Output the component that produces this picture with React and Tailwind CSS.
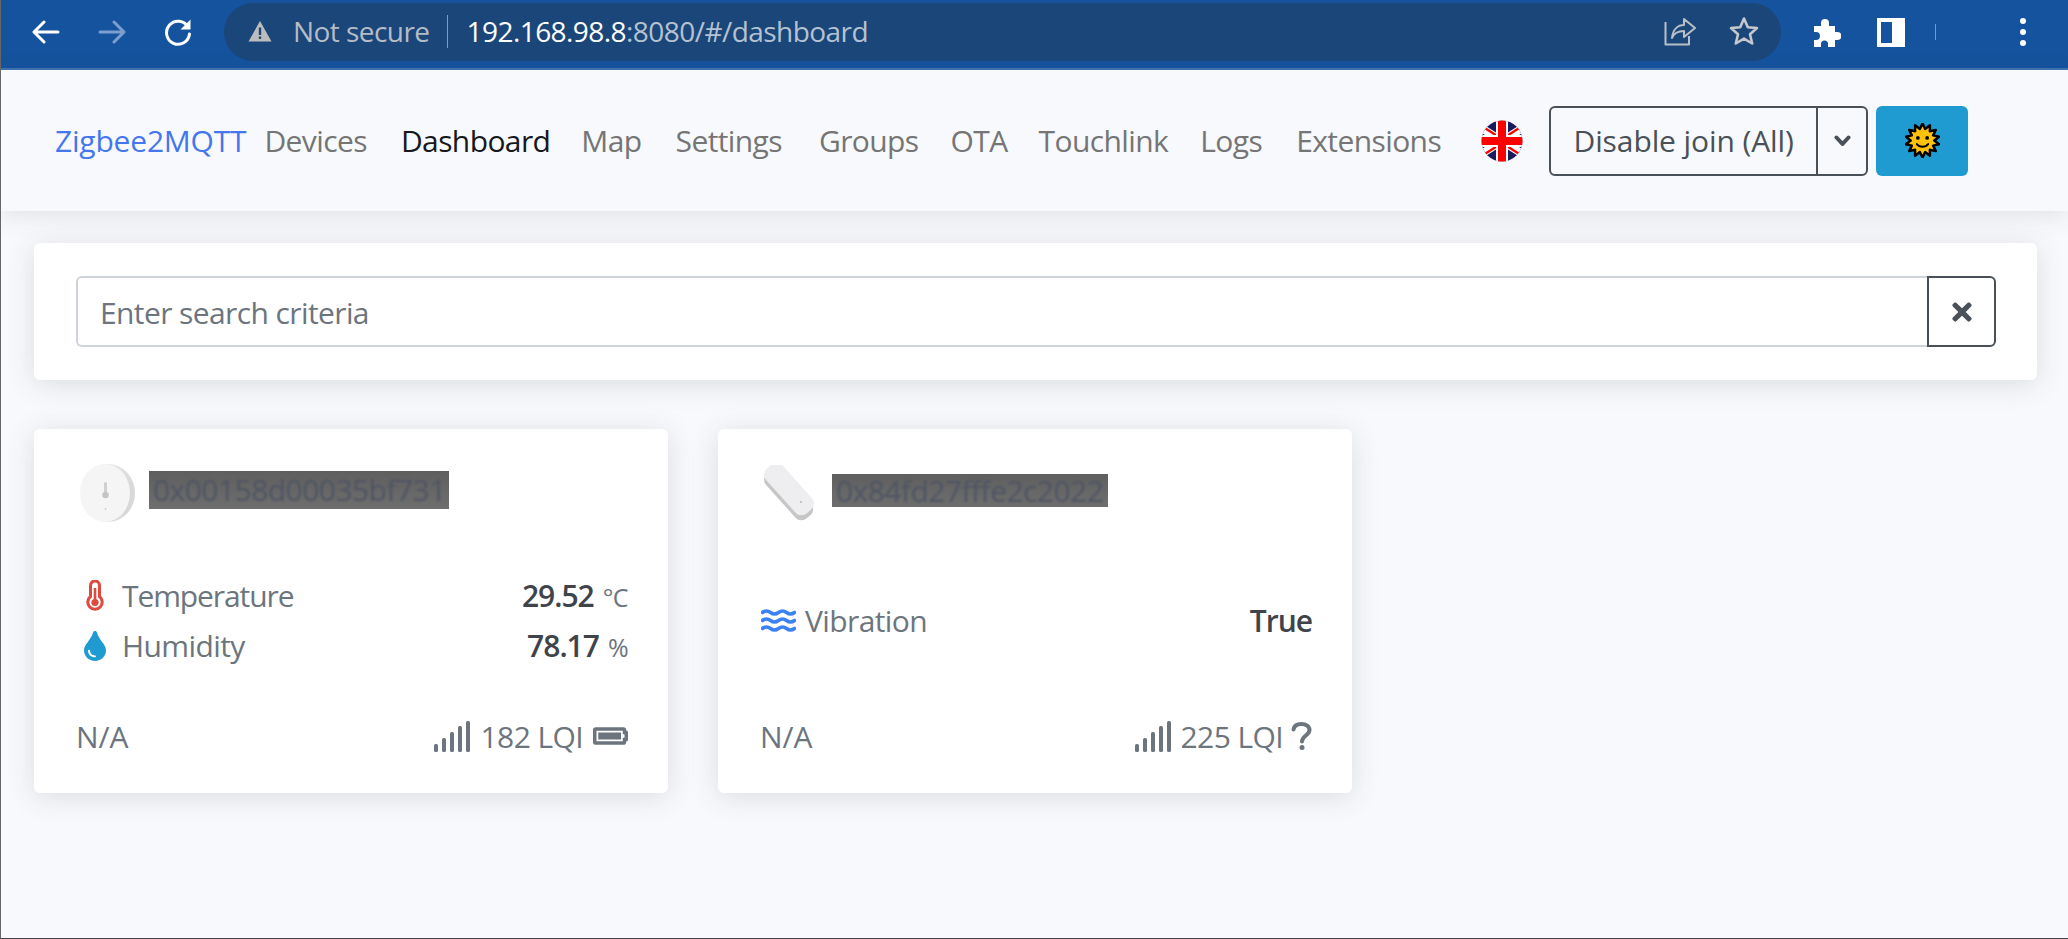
import { FaBatteryFull, FaTimes, FaTint } from "react-icons/fa";

const navLinks = [
    { label: "Devices", gap: "mr-[34px]" },
    { label: "Dashboard", gap: "mr-[31px]", active: true },
    { label: "Map", gap: "mr-[34px]" },
    { label: "Settings", gap: "mr-[37px]" },
    { label: "Groups", gap: "mr-[32px]" },
    { label: "OTA", gap: "mr-[31px]" },
    { label: "Touchlink", gap: "mr-[32px]" },
    { label: "Logs", gap: "mr-[34px]" },
    { label: "Extensions", gap: "mr-[40px]" },
];

function SunFace() {
    const points = [];
    for (let i = 0; i < 28; i++) {
        const r = i % 2 === 0 ? 16.5 : 11.5;
        const a = (Math.PI * i) / 14;
        points.push(`${(17 + r * Math.sin(a)).toFixed(2)},${(17 - r * Math.cos(a)).toFixed(2)}`);
    }
    return (
        <svg viewBox="0 0 34 34" className="w-[35px] h-[35px]">
            <polygon points={points.join(" ")} fill="#ffc20a" stroke="#000" strokeWidth="2.4" strokeLinejoin="round" />
            <circle cx="12.5" cy="14.5" r="1.8" fill="#000" />
            <circle cx="21.5" cy="14.5" r="1.8" fill="#000" />
            <path d="M11.5 20.5c2.5 3.4 8.5 3.4 11 0" fill="none" stroke="#000" strokeWidth="1.8" strokeLinecap="round" />
        </svg>
    );
}

function UkFlag() {
    return (
        <svg viewBox="0 0 42 42" className="w-[42px] h-[42px] mr-[26px]">
            <clipPath id="flag-circle">
                <circle cx="21" cy="21" r="20.5" />
            </clipPath>
            <g clipPath="url(#flag-circle)">
                <rect width="42" height="42" fill="#1a1a5e" />
                <path d="M-12 0L54 42M54 0L-12 42" stroke="#fff" strokeWidth="8" />
                <path d="M-12 -2L21 19M54 44L21 23M54 -2L21 19M-12 44L21 23" stroke="#f00" strokeWidth="2.5" />
                <path d="M21 0V42M0 21H42" stroke="#fff" strokeWidth="12" />
                <path d="M21 0V42M0 21H42" stroke="#f00" strokeWidth="8" />
            </g>
        </svg>
    );
}

function SignalBars() {
    return (
        <svg viewBox="0 0 36 31" className="w-[36px] h-[31px]" fill="#6c757d">
            <rect x="0" y="23" width="4" height="8" rx="1.5" />
            <rect x="8" y="17" width="4" height="14" rx="1.5" />
            <rect x="16" y="11" width="4" height="20" rx="1.5" />
            <rect x="24" y="5" width="4" height="26" rx="1.5" />
            <rect x="32" y="0" width="4" height="31" rx="1.5" />
        </svg>
    );
}

function Thermometer() {
    return (
        <svg viewBox="0 0 18 31" className="w-[18px] h-[31px]" fill="none">
            <path d="M4.5 16.5V5.5a4.5 4.5 0 0 1 9 0V16.5a7.2 7.2 0 1 1-9 0z" stroke="#de4b3e" strokeWidth="3" />
            <rect x="7.7" y="8" width="2.6" height="12" fill="#de4b3e" />
            <circle cx="9" cy="22.5" r="3.6" fill="#de4b3e" />
        </svg>
    );
}

function Waves() {
    return (
        <svg viewBox="0 0 35 23" className="w-[35px] h-[23px]" fill="none" stroke="#3b82f6" strokeWidth="3.6" strokeLinecap="round">
            <path d="M1.5 3.5q4 -3 8 0t8 0t8 0t8 0" />
            <path d="M1.5 11.5q4 -3 8 0t8 0t8 0t8 0" />
            <path d="M1.5 19.5q4 -3 8 0t8 0t8 0t8 0" />
        </svg>
    );
}

function QuestionMark() {
    return (
        <svg viewBox="0 0 21 28" className="w-[21px] h-[28px]" fill="none">
            <path d="M2.5 7.5C3 4 6 2 10.5 2c4.500 0 8 2.500 8 6 0 5.500-7.500 5.500-7.500 11.500" stroke="#6c757d" strokeWidth="4" strokeLinecap="round" />
            <circle cx="11" cy="25.500" r="2.500" fill="#6c757d" />
        </svg>
    );
}

function DiscSensor() {
    return (
        <svg viewBox="0 0 56 60" className="w-[56px] h-[60px]">
            <defs>
                <linearGradient id="disc-edge" x1="0" y1="0" x2="1" y2="0.3">
                    <stop offset="0" stopColor="#f4f4f4" />
                    <stop offset="1" stopColor="#d8d8d8" />
                </linearGradient>
            </defs>
            <ellipse cx="29" cy="30" rx="27" ry="29" fill="url(#disc-edge)" />
            <ellipse cx="26" cy="30" rx="25" ry="29" fill="#f5f5f5" />
            <rect x="25" y="19" width="3" height="13" rx="1.5" fill="#cfcfcf" />
            <circle cx="26.5" cy="32" r="3.2" fill="#c4c4c4" />
            <circle cx="26.5" cy="46" r="0.8" fill="#bbb" />
        </svg>
    );
}

function BarSensor() {
    return (
        <svg viewBox="0 0 52 56" className="w-[52px] h-[56px]">
            <g transform="translate(0 5) rotate(48 26 24)">
                <rect x="-4" y="14" width="60" height="21" rx="8" fill="#c6c6c6" />
            </g>
            <g transform="rotate(48 26 24)">
                <rect x="-4" y="13" width="60" height="22" rx="8" fill="#eeeef0" />
            </g>
            <circle cx="38" cy="37" r="0.7" fill="#777" />
        </svg>
    );
}

function MaskedAddress({ children, width, height }) {
    return (
        <div className={`flex items-center bg-gradient-to-b from-[#5f5f5f] to-[#6e6e6e] ${width} ${height}`}>
            <span className="ml-[4px] text-[30px] leading-none text-[#4f5564] tracking-[-0.55px] blur-[1px] whitespace-nowrap">
                {children}
            </span>
        </div>
    );
}

function DeviceCard({ image, address, footerRight, children }) {
    return (
        <div className="w-[634px] h-[364px] flex flex-col bg-white rounded-[6px] shadow-[0_4px_28px_rgba(58,59,69,0.15)] pl-[42px] pr-[40px]">
            <div className="h-[93px] pt-[34px] flex items-start">{image}{address}</div>
            <div className="flex-1 flex flex-col justify-center pt-2 text-[#6c757d]">{children}</div>
            <div className="h-[50px] mb-[32px] flex items-center justify-between text-[#6c757d]">
                <span className="tracking-[0px]">N/A</span>
                {footerRight}
            </div>
        </div>
    );
}

function MetricRow({ icon, iconBox, label, labelClass, value, unit }) {
    return (
        <div className="h-[50px] flex items-center justify-between">
            <div className="flex items-center">
                <span className={`flex justify-center ${iconBox}`}>{icon}</span>
                <span className={labelClass}>{label}</span>
            </div>
            <div className="flex items-baseline">
                <span className="font-semibold tracking-[-1px] text-[#3f444b]">{value}</span>
                {unit && <span className="ml-[9px] text-[25px] text-[#6c757d]">{unit}</span>}
            </div>
        </div>
    );
}

export default function App() {
    return (
        <div className="relative h-[939px] overflow-hidden bg-[#f8f9fc] text-[30px] tracking-[-0.6px] text-[#6c757d] border-l border-l-[#666] border-b border-b-[#444]" style={{ fontFamily: '"Open Sans", sans-serif' }}>
            {/* Browser chrome */}
            <div className="h-[70px] flex items-start bg-[#15539e] border-b-[2px] border-b-[#3f74b4] -ml-px">
                <div className="h-[64px] w-[224px] flex items-center pl-[32px]">
                    <svg viewBox="0 0 28 24" className="w-[28px] h-[24px] mr-[38px]" fill="none" stroke="#fff" strokeWidth="3" strokeLinecap="round" strokeLinejoin="round">
                        <path d="M26 12H3M12 2L2 12L12 22" />
                    </svg>
                    <svg viewBox="0 0 28 24" className="w-[28px] h-[24px] mr-[38px]" fill="none" stroke="#7ba0ce" strokeWidth="3" strokeLinecap="round" strokeLinejoin="round">
                        <path d="M2 12H25M16 2L26 12L16 22" />
                    </svg>
                    <svg viewBox="0 0 28 28" className="w-[28px] h-[28px]" fill="none">
                        <path d="M24 9A11.500 11.500 0 1 0 25.500 16" stroke="#fff" strokeWidth="3" strokeLinecap="round" />
                        <path d="M26.500 1.500V11.500H16.500z" fill="#fff" />
                    </svg>
                </div>
                <div className="mt-[3px] h-[58px] w-[1557px] rounded-full bg-[#1a4679] flex items-center pl-[24px] pr-[22px] pb-[2px] text-[28px] tracking-[-0.55px]">
                    <svg viewBox="0 0 24 22" className="w-[24px] h-[22px] mr-[21px]">
                        <path d="M12 1L23.500 21.500H.5z" fill="#bdbdbd" />
                        <rect x="10.800" y="7.500" width="2.400" height="7.500" fill="#1a4679" />
                        <rect x="10.800" y="16.500" width="2.400" height="2.400" fill="#1a4679" />
                    </svg>
                    <span className="text-[#b5bcc6] whitespace-nowrap">Not secure</span>
                    <span className="w-px h-[33px] bg-[#8a9cb3] ml-[17px] mr-[19px]" />
                    <span className="text-white whitespace-nowrap">192.168.98.8</span>
                    <span className="text-[#b5c2d2] whitespace-nowrap">:8080/#/dashboard</span>
                    <svg viewBox="0 0 32 30" className="w-[32px] h-[30px] ml-auto mr-[33px]" fill="none" stroke="#b9bfc7" strokeWidth="2" strokeLinejoin="round">
                        <path d="M1.500 6V28.500H25V20" />
                        <path d="M8 22C9 13 14 9 20 9V3L31 12L20 21V15C14 15 10 17 8 22z" />
                    </svg>
                    <svg viewBox="0 0 30 30" className="w-[30px] h-[30px]" fill="none" stroke="#c5c9ce" strokeWidth="2.600" strokeLinejoin="round">
                        <path d="M15 2.500L18.800 11.200L28 12L21 18.200L23.200 27.500L15 22.600L6.800 27.500L9 18.200L2 12L11.200 11.200z" />
                    </svg>
                </div>
                <div className="h-[64px] flex-1 flex items-center pl-[31px] text-white">
                    <svg viewBox="0 0 29 29" className="w-[29px] h-[29px] mr-[36px]" fill="#fff">
                        <path d="M2 8H9V5a4 4 0 0 1 8 0V8H23V14H25.500a4 4 0 0 1 0 8H23V29H16V26a3.500 3.500 0 0 0-7 0V29H2V22H4a4 4 0 0 0 0-8H2z" />
                    </svg>
                    <span className="w-[28px] h-[29px] bg-white flex items-center pl-[4px] mr-[30px]">
                        <span className="w-[11px] h-[21px] bg-[#15539e]" />
                    </span>
                    <span className="w-px h-[16px] bg-[#5fae8f] mr-[84px]" />
                    <span className="flex flex-col gap-[5px]">
                        <span className="w-[6px] h-[6px] rounded-full bg-white" />
                        <span className="w-[6px] h-[6px] rounded-full bg-white" />
                        <span className="w-[6px] h-[6px] rounded-full bg-white" />
                    </span>
                </div>
            </div>

            {/* Navbar */}
            <nav className="h-[141px] flex items-center pl-[54px] shadow-[0_4px_24px_rgba(58,59,69,0.12)]">
                <span className="text-[#4477ee] tracking-[-0.2px] mr-[18px]">Zigbee2MQTT</span>
                {navLinks.map(({ label, gap, active }) => (
                    <span key={label} className={`${gap} ${active ? "text-[#16181b]" : "text-[#757575]"}`}>
                        {label}
                    </span>
                ))}
                <UkFlag />
                <div className="h-[70px] w-[319px] flex border-[2px] border-[#495057] rounded-[6px] text-[#495057] mr-[8px]">
                    <span className="flex-1 flex items-center justify-center tracking-[-0.1px]">Disable join (All)</span>
                    <span className="w-[50px] border-l-[2px] border-l-[#495057] flex items-center justify-center">
                        <svg viewBox="0 0 17 12" className="w-[17px] h-[12px]" fill="none" stroke="#495057" strokeWidth="4" strokeLinecap="round" strokeLinejoin="round">
                            <path d="M2.5 2.500L8.500 9L14.500 2.500" />
                        </svg>
                    </span>
                </div>
                <button className="w-[92px] h-[70px] rounded-[6px] bg-[#1f9bd1] flex items-center justify-center">
                    <SunFace />
                </button>
            </nav>

            {/* Search */}
            <section className="mt-[32px] ml-[33px] w-[2003px] h-[137px] bg-white rounded-[6px] shadow-[0_4px_28px_rgba(58,59,69,0.15)] flex items-center pl-[42px]">
                <div className="w-[1851px] h-[71px] flex items-center pl-[22px] pt-[2px] border-[2px] border-r-0 border-[#ced4da] rounded-l-[6px] text-[#6c757d]">
                    Enter search criteria
                </div>
                <button className="w-[69px] h-[71px] flex items-center justify-center border-[2px] border-[#495057] rounded-r-[6px] text-[#495057]">
                    <FaTimes className="w-[26px] h-[28px]" />
                </button>
            </section>

            {/* Device cards */}
            <section className="mt-[49px] ml-[33px] flex gap-[50px]">
                <DeviceCard
                    image={<span className="ml-[3px] mr-[14px]"><DiscSensor /></span>}
                    address={<div className="mt-[8px]"><MaskedAddress width="w-[300px]" height="h-[38px]">0x00158d00035bf731</MaskedAddress></div>}
                    footerRight={
                        <div className="flex items-center">
                            <SignalBars />
                            <span className="ml-[11px] mr-[10px]">182 LQI</span>
                            <FaBatteryFull className="w-[35px] h-[28px]" />
                        </div>
                    }
                >
                    <MetricRow
                        icon={<Thermometer />}
                        iconBox="w-[38px] mr-[8px]"
                        label="Temperature"
                        labelClass="tracking-[-1.1px]"
                        value="29.52"
                        unit="°C"
                    />
                    <MetricRow
                        icon={<FaTint preserveAspectRatio="none" className="w-[22px] h-[30px] text-[#1f9bd1]" />}
                        iconBox="w-[38px] mr-[8px]"
                        label="Humidity"
                        value="78.17"
                        unit="%"
                    />
                </DeviceCard>
                <DeviceCard
                    image={<span className="ml-[3px] mr-[17px] mt-[2px]"><BarSensor /></span>}
                    address={<div className="mt-[11px]"><MaskedAddress width="w-[276px]" height="h-[33px]">0x84fd27fffe2c2022</MaskedAddress></div>}
                    footerRight={
                        <div className="flex items-center">
                            <SignalBars />
                            <span className="ml-[10px] mr-[8px]">225 LQI</span>
                            <QuestionMark />
                        </div>
                    }
                >
                    <MetricRow
                        icon={<Waves />}
                        iconBox="w-[36px] mr-[9px]"
                        label="Vibration"
                        value="True"
                    />
                </DeviceCard>
            </section>
        </div>
    );
}
